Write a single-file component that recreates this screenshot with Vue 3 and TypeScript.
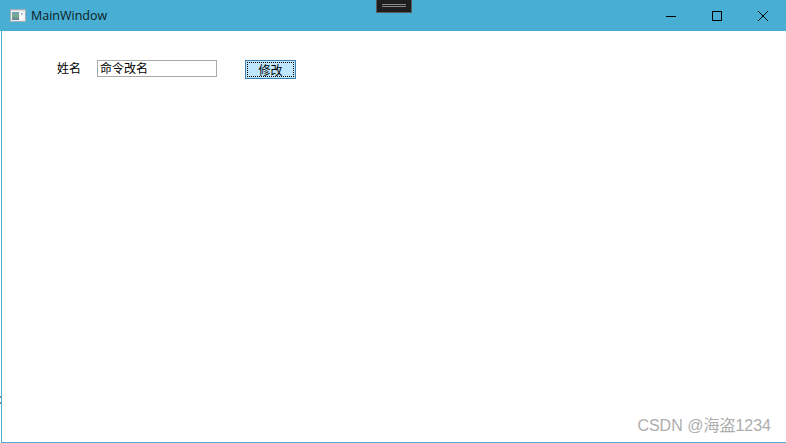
<script setup lang="ts">
const title: string = 'MainWindow'
</script>

<template>
  <div class="window">
    <header class="titlebar">
      <svg class="app-icon" width="16" height="13" viewBox="0 0 16 13">
        <defs>
          <linearGradient id="panel" x1="0" y1="0" x2="0" y2="1">
            <stop offset="0" stop-color="#6aa0b8" />
            <stop offset="0.5" stop-color="#7fa98a" />
            <stop offset="1" stop-color="#5c7f9c" />
          </linearGradient>
        </defs>
        <rect x="0.5" y="0.5" width="15" height="12" fill="#eef2f4" stroke="#a3adb3" />
        <rect x="1" y="1" width="14" height="1" fill="#d5dbdf" />
        <rect x="2" y="3" width="7" height="8" fill="url(#panel)" />
        <rect x="10" y="3" width="4" height="8" fill="#f8fafa" />
        <rect x="11" y="4" width="2" height="2" fill="#a9c2cf" />
      </svg>
      <span class="title">{{ title }}</span>
      <div class="controls">
        <svg width="12" height="12" viewBox="0 0 12 12"><path d="M1 6.5H11" stroke="#000" fill="none" /></svg>
        <svg width="12" height="12" viewBox="0 0 12 12"><rect x="1.5" y="1.5" width="9" height="9" stroke="#000" fill="none" /></svg>
        <svg width="12" height="12" viewBox="0 0 12 12"><path d="M1 1L11 11M11 1L1 11" stroke="#000" fill="none" /></svg>
      </div>
    </header>
    <main class="content">
      <span class="label">姓名</span>
      <div class="input">命令改名</div>
      <button class="btn" type="button"><span class="focus">修改</span></button>
    </main>
    <div class="watermark">CSDN @海盗1234</div>
    <div class="debug-bar"><i></i><i></i></div>
    <div class="edge-mark edge-a"></div>
    <div class="edge-mark edge-b"></div>
  </div>
</template>

<style scoped>
.window {
  position: relative;
  box-sizing: border-box;
  width: 786px;
  height: 443px;
  display: flex;
  flex-direction: column;
  background: #fff;
  font-family: "Noto Sans CJK SC", "Liberation Sans", sans-serif;
  overflow: hidden;
}
.window::before {
  content: "";
  position: absolute;
  left: 1px;
  top: 31px;
  bottom: 0;
  width: 1px;
  background: #4bafd3;
}
.window::after {
  content: "";
  position: absolute;
  left: 1px;
  right: 0;
  bottom: 0;
  height: 1px;
  background: #4bafd3;
}
.titlebar {
  height: 31px;
  flex: none;
  display: flex;
  align-items: center;
  padding-left: 10px;
  background: #48aed3;
  color: #0c1c24;
}
.app-icon { flex: none; }
.title {
  margin-left: 5px;
  font-family: "Open Sans", "Liberation Sans", sans-serif;
  font-size: 12.5px;
}
.controls {
  margin-left: auto;
  display: flex;
  align-items: center;
  gap: 34px;
  padding-right: 17px;
}
.controls svg { display: block; }
.content {
  display: flex;
  align-items: flex-start;
  padding: 29px 0 0 57px;
  font-size: 12px;
  color: #000;
}
.label { width: 40px; line-height: 16px; }
.input {
  box-sizing: border-box;
  width: 120px;
  height: 17px;
  border: 1px solid #a9a9a9;
  padding-left: 2px;
  line-height: 14px;
}
.btn {
  box-sizing: border-box;
  width: 51px;
  height: 19px;
  margin-left: 28px;
  padding: 1px;
  border: 1px solid #3c7fb1;
  background: #bee6fd;
  font: inherit;
  color: #000;
}
.focus {
  display: block;
  height: 15px;
  line-height: 13px;
  border: 1px dotted #000;
  box-sizing: border-box;
}
.watermark {
  position: absolute;
  right: 15px;
  bottom: 7px;
  font-family: "Liberation Sans", "Noto Sans CJK SC", sans-serif;
  font-size: 16px;
  line-height: 20px;
  color: #adadad;
}
.debug-bar {
  position: absolute;
  left: 376px;
  top: 0;
  box-sizing: border-box;
  width: 36px;
  height: 13px;
  background: #1e1e1e;
  border: 1px solid #5a5a5a;
  border-top: none;
  display: flex;
  flex-direction: column;
  align-items: center;
  gap: 1px;
  padding-top: 4px;
}
.debug-bar i {
  display: block;
  width: 24px;
  height: 1px;
  background: #8a8a8a;
}
.edge-mark {
  position: absolute;
  left: 0;
  width: 1px;
  height: 2px;
  background: #8c8c8c;
}
.edge-a { top: 396px; }
.edge-b { top: 402px; }
</style>

<style>
html, body { margin: 0; background: #fff; }
</style>
